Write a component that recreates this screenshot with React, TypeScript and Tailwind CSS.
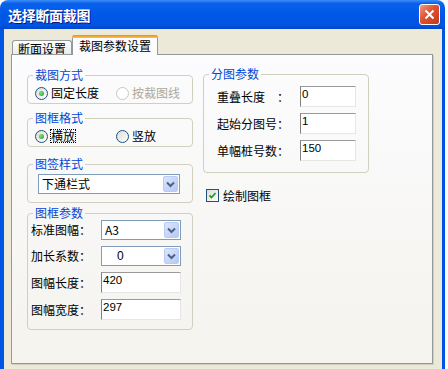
import React from "react";

function Radio({ checked, disabled }: { checked?: boolean; disabled?: boolean }) {
  return (
    <span
      className={
        disabled
          ? "w-[13px] h-[13px] rounded-full border border-[#CAC8BB] bg-white flex items-center justify-center shrink-0"
          : "w-[13px] h-[13px] rounded-full border border-[#1C5180] bg-[linear-gradient(135deg,#DCDCD7,#FFFFFF)] flex items-center justify-center shrink-0"
      }
    >
      {checked && (
        <span className="w-[5px] h-[5px] rounded-full bg-[radial-gradient(circle_at_35%_35%,#7BE07A,#21A121)]" />
      )}
    </span>
  );
}

function Chevron() {
  return (
    <svg width="9" height="7" viewBox="0 0 9 7">
      <path d="M1 1.5 L4.5 5 L8 1.5" fill="none" stroke="#4D6185" strokeWidth="2" />
    </svg>
  );
}

function Combo({ value, indent }: { value: string; indent?: boolean }) {
  return (
    <div className="h-[20px] w-full border border-[#7F9DB9] bg-white flex items-center">
      <span className={indent ? "flex-1 pl-[15px] font-['Liberation_Sans',sans-serif] text-[12px]" : "flex-1 pl-[3px]"}>
        {value}
      </span>
      <span className="w-[15px] h-[16px] mr-[1px] rounded-[2px] border border-[#B9CAF3] bg-[linear-gradient(135deg,#DCE5FB,#B6C9F5)] flex items-center justify-center">
        <Chevron />
      </span>
    </div>
  );
}

function TextBox({ value, w }: { value: string; w: string }) {
  return (
    <div
      className={
        (w === "56" ? "w-[56px] " : "w-[80px] ") +
        "h-[21px] bg-white border-t border-l border-r border-b border-t-[#9A9A9A] border-l-[#808080] border-r-[#E6E6E6] border-b-[#E6E6E6] pl-[1px] pt-[1px] font-['Liberation_Sans',sans-serif] text-[11.5px] leading-[13px]"
      }
    >
      {value}
    </div>
  );
}

function Group({ title, children, className }: { title: string; children: React.ReactNode; className?: string }) {
  return (
    <fieldset className={"border border-[#D0D0BF] rounded-[4px] " + (className ?? "")}>
      <legend className="ml-[5px] px-[2px] text-[#0046D5] leading-[14px]">{title}</legend>
      {children}
    </fieldset>
  );
}

export default function App() {
  return (
    <div className="w-[448px] h-[369px] bg-white overflow-hidden font-['Noto_Sans_CJK_SC',sans-serif] text-[12px] leading-[14px] text-black">
      <div className="w-[445px] h-full flex flex-col rounded-t-[8px] overflow-hidden">
        {/* Title bar */}
        <div className="h-[29px] shrink-0 flex items-center justify-between pl-[8px] pr-[5px] bg-[linear-gradient(180deg,#3D8EF7_0%,#0A61EC_12%,#0058E8_50%,#0053E0_88%,#0045C8_100%)]">
          <span className="text-white font-bold text-[14px] leading-[16px] tracking-[-0.3px] [text-shadow:1px_1px_#0A1883]">
            选择断面裁图
          </span>
          <div className="w-[21px] h-[21px] rounded-[3px] border border-white bg-[linear-gradient(135deg,#F29A7E_0%,#E0502E_45%,#C2381C_100%)] flex items-center justify-center">
            <svg width="11" height="11" viewBox="0 0 11 11">
              <path d="M1.5 1.5 L9.5 9.5 M9.5 1.5 L1.5 9.5" stroke="white" strokeWidth="2" />
            </svg>
          </div>
        </div>

        {/* Body */}
        <div className="flex-1 flex bg-[#ECE9D8] border-l-4 border-r-[3px] border-[#0055E5]">
          <div className="flex-1 pl-[7px] pr-[9px] pt-[6px] flex flex-col">
            {/* Tabs */}
            <div className="h-[19px] flex items-end pl-[1px]">
              <div className="h-[14px] w-[60px] border border-b-0 border-[#919B9C] rounded-t-[3px] bg-[linear-gradient(180deg,#FFFFFF,#ECEBE6)] flex items-center justify-center pt-[2px]">
                断面设置
              </div>
              <div className="relative z-10 h-[20px] w-[86px] mb-[-1px] border-x border-[#919B9C] rounded-t-[3px] bg-[#FCFCFE] flex flex-col">
                <div className="h-[3px] rounded-t-[3px] bg-[linear-gradient(180deg,#E68B2C,#FFC73C)] mx-[-1px]" />
                <div className="flex-1 flex items-center justify-center pb-[2px]">裁图参数设置</div>
              </div>
            </div>

            {/* Panel */}
            <div className="h-[310px] border border-[#919B9C] bg-[linear-gradient(180deg,#FCFCFE,#F4F3EE)] shadow-[1px_1px_0_#D0CEBF] pt-[13px] pl-[15px] flex gap-[10px]">
              {/* Left column */}
              <div className="w-[166px] flex flex-col">
                <Group title="裁图方式">
                  <div className="pt-[4px] pb-[3px] pl-[7px] flex items-center h-[21px]">
                    <div className="w-[81px] flex items-center gap-[3px] h-[14px]">
                      <Radio checked />
                      <span>固定长度</span>
                    </div>
                    <div className="flex items-center gap-[3px] h-[14px]">
                      <Radio disabled />
                      <span className="text-[#ACA899]">按裁图线</span>
                    </div>
                  </div>
                </Group>

                <Group title="图框格式" className="mt-[7px]">
                  <div className="pt-[4px] pb-[3px] pl-[7px] flex items-center h-[21px]">
                    <div className="w-[81px] flex items-center gap-[2px] h-[14px]">
                      <Radio checked />
                      <span className="border border-dotted border-black leading-[12px]">横放</span>
                    </div>
                    <div className="flex items-center gap-[3px] h-[14px]">
                      <Radio />
                      <span>竖放</span>
                    </div>
                  </div>
                </Group>

                <Group title="图签样式" className="mt-[10px]">
                  <div className="pt-[3px] pb-[8px] pl-[10px] pr-[12px]">
                    <Combo value="下通栏式" />
                  </div>
                </Group>

                <Group title="图框参数" className="mt-[3px]">
                  <div className="pl-[3px] pb-[9px] flex flex-col gap-[6px]">
                    <div className="flex items-center">
                      <span className="w-[70px]">标准图幅：</span>
                      <div className="w-[80px]">
                        <Combo value="A3" />
                      </div>
                    </div>
                    <div className="flex items-center">
                      <span className="w-[70px]">加长系数：</span>
                      <div className="w-[80px]">
                        <Combo value="0" indent />
                      </div>
                    </div>
                    <div className="flex items-center">
                      <span className="w-[70px]">图幅长度：</span>
                      <TextBox value="420" w="80" />
                    </div>
                    <div className="flex items-center">
                      <span className="w-[70px]">图幅宽度：</span>
                      <TextBox value="297" w="80" />
                    </div>
                  </div>
                </Group>
              </div>

              {/* Right column */}
              <div className="w-[166px] flex flex-col mt-[-1px]">
                <Group title="分图参数">
                  <div className="pl-[13px] pt-[5px] pb-[11px] flex flex-col gap-[6px]">
                    <div className="flex items-center">
                      <span className="w-[60px]">重叠长度</span>
                      <span className="w-[12px]">：</span>
                      <span className="w-[11px]" />
                      <TextBox value="0" w="56" />
                    </div>
                    <div className="flex items-center">
                      <span className="w-[60px]">起始分图号</span>
                      <span className="w-[12px]">：</span>
                      <span className="w-[11px]" />
                      <TextBox value="1" w="56" />
                    </div>
                    <div className="flex items-center">
                      <span className="w-[60px]">单幅桩号数</span>
                      <span className="w-[12px]">：</span>
                      <span className="w-[11px]" />
                      <TextBox value="150" w="56" />
                    </div>
                  </div>
                </Group>

                <div className="mt-[16px] ml-[3px] flex items-center gap-[4px] h-[13px]">
                  <span className="w-[13px] h-[13px] border border-[#1C5180] bg-[linear-gradient(135deg,#DCDCD7,#FFFFFF)] flex items-center justify-center">
                    <svg width="9" height="9" viewBox="0 0 9 9">
                      <path d="M1.5 4.5 L3.5 6.5 L7.5 2" fill="none" stroke="#21A121" strokeWidth="1.8" />
                    </svg>
                  </span>
                  <span>绘制图框</span>
                </div>
              </div>
            </div>
          </div>
        </div>
      </div>
    </div>
  );
}
